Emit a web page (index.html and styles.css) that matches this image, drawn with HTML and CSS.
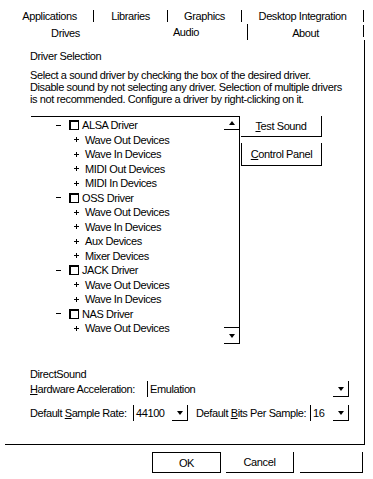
FILE: index.html
```html
<!DOCTYPE html>
<html>
<head>
<meta charset="utf-8">
<link rel="stylesheet" href="styles.css">
</head>
<body>
<div class="dialog">
  <div class="tabs">
    <div class="tabrow row1">
      <div class="tab t-app">Applications</div>
      <div class="tab t-lib">Libraries</div>
      <div class="tab t-gfx">Graphics</div>
      <div class="tab t-desk">Desktop Integration</div>
    </div>
    <div class="tabrow row2">
      <div class="tab t-drives">Drives</div>
      <div class="tab t-audio">Audio</div>
      <div class="tab t-about">About</div>
    </div>
  </div>
  <div class="panel">
    <div class="heading">Driver Selection</div>
    <p class="intro">Select a sound driver by checking the box of the desired driver.<br>Disable sound by not selecting any driver. Selection of multiple drivers<br>is not recommended. Configure a driver by right-clicking on it.</p>
    <div class="drivers">
      <div class="listbox">
        <ul class="tree">
          <li class="node parent"><span class="collapse"></span><span class="check"></span>ALSA Driver</li>
          <li class="node child"><span class="expand"></span>Wave Out Devices</li>
          <li class="node child"><span class="expand"></span>Wave In Devices</li>
          <li class="node child"><span class="expand"></span>MIDI Out Devices</li>
          <li class="node child"><span class="expand"></span>MIDI In Devices</li>
          <li class="node parent"><span class="collapse"></span><span class="check"></span>OSS Driver</li>
          <li class="node child"><span class="expand"></span>Wave Out Devices</li>
          <li class="node child"><span class="expand"></span>Wave In Devices</li>
          <li class="node child"><span class="expand"></span>Aux Devices</li>
          <li class="node child"><span class="expand"></span>Mixer Devices</li>
          <li class="node parent"><span class="collapse"></span><span class="check"></span>JACK Driver</li>
          <li class="node child"><span class="expand"></span>Wave Out Devices</li>
          <li class="node child"><span class="expand"></span>Wave In Devices</li>
          <li class="node parent"><span class="collapse"></span><span class="check"></span>NAS Driver</li>
          <li class="node child"><span class="expand"></span>Wave Out Devices</li>
        </ul>
        <div class="scrollbar">
          <div class="sb-btn sb-up"><span class="arrow-up"></span></div>
          <div class="sb-track"></div>
          <div class="sb-btn sb-down"><span class="arrow-down"></span></div>
        </div>
      </div>
      <div class="side-buttons">
        <div class="btn btn-test"><span><u>T</u>est Sound</span></div>
        <div class="btn btn-cp"><span><u>C</u>ontrol Panel</span></div>
      </div>
    </div>
    <div class="ds-title">DirectSound</div>
    <div class="ds-row ds-row1">
      <div class="lbl lbl-hw"><u>H</u>ardware Acceleration:</div>
      <div class="combo combo-hw"><span class="combo-text">Emulation</span><span class="combo-btn"><span class="arrow-down"></span></span></div>
    </div>
    <div class="ds-row ds-row2">
      <div class="lbl lbl-rate">Default <u>S</u>ample Rate:</div>
      <div class="combo combo-rate"><span class="combo-text">44100</span><span class="combo-btn"><span class="arrow-down"></span></span></div>
      <div class="lbl lbl-bits">Default <u>B</u>its Per Sample:</div>
      <div class="combo combo-bits"><span class="combo-text">16</span><span class="combo-btn"><span class="arrow-down"></span></span></div>
    </div>
  </div>
  <div class="footer">
    <div class="btn fbtn btn-ok">OK</div>
    <div class="btn fbtn btn-cancel">Cancel</div>
    <div class="btn fbtn btn-apply"></div>
  </div>
</div>
</body>
</html>
```

FILE: styles.css
```css
* { box-sizing: border-box; }

body {
  margin: 0;
  background: #fff;
  color: #000;
  font-family: "Liberation Sans", Arial, sans-serif;
  font-size: 11px;
  letter-spacing: -0.4px;
}

.dialog {
  width: 373px;
  height: 479px;
  overflow: hidden;
}

/* ---------- tabs ---------- */
.tabs { padding-top: 10px; }

.tabrow {
  display: flex;
  margin-left: 6px;
}

.tab {
  text-align: center;
  white-space: nowrap;
}

.row1 .tab {
  height: 12px;
  line-height: 12px;
  border-right: 1px solid #000;
}

.t-app { width: 88px; }
.t-lib { width: 74px; }
.t-gfx { width: 74px; }
.t-desk { width: 122px; }

.row2 {
  height: 18px;
  align-items: flex-start;
}

.t-drives {
  width: 119px;
  margin-top: 4px;
  line-height: 14px;
}

.t-audio {
  width: 123px;
  margin-top: 2px;
  height: 16px;
  line-height: 16px;
  border-right: 1px solid #000;
}

.t-about {
  width: 116px;
  margin-top: 3px;
  height: 12px;
  line-height: 16px;
  border-right: 1px solid #000;
}

/* ---------- panel ---------- */
.panel {
  margin-left: 5px;
  width: 360px;
  height: 405px;
  border-right: 1px solid #000;
  border-bottom: 1px solid #000;
  padding: 10px 0 0 25px;
}

.heading { line-height: 12px; }

.intro {
  margin: 7px 0 0;
  line-height: 12px;
  white-space: nowrap;
}

.drivers {
  display: flex;
  margin-top: 11px;
  margin-left: 1px;
}

.listbox {
  width: 209px;
  height: 228px;
  border-top: 1px solid #000;
  border-right: 1px solid #000;
  display: flex;
}

.tree {
  list-style: none;
  margin: 0;
  padding: 1px 0 0;
  flex: 1;
}

.node {
  display: flex;
  align-items: center;
  height: 14.5px;
  line-height: 14.5px;
  white-space: nowrap;
}

.node.parent { padding-left: 25px; }
.node.child { padding-left: 43px; }

.collapse {
  width: 5px;
  height: 1px;
  background: #000;
  margin-right: 8px;
}

.check {
  width: 10px;
  height: 10px;
  border: 1px solid #000;
  box-shadow: inset 1px 1px 0 #000;
  margin-right: 3px;
}

.expand {
  width: 5px;
  height: 5px;
  margin-right: 6px;
  background:
    linear-gradient(#000, #000) 0 2px / 5px 1px no-repeat,
    linear-gradient(#000, #000) 2px 0 / 1px 5px no-repeat;
}

.scrollbar {
  width: 15px;
  display: flex;
  flex-direction: column;
}

.sb-btn {
  display: flex;
  align-items: center;
  justify-content: center;
}

.sb-up {
  height: 13px;
  border-bottom: 1px solid #000;
}

.sb-track { flex: 1; }

.sb-down {
  height: 17px;
  border-top: 1px solid #000;
  border-bottom: 1px solid #000;
}

.arrow-up,
.arrow-down {
  display: block;
  width: 1px;
  height: 0;
  border-left: 3px solid transparent;
  border-right: 3px solid transparent;
}

.arrow-up { border-bottom: 4px solid #000; }
.arrow-down { border-top: 4px solid #000; }

.side-buttons {
  margin-left: 1px;
  width: 81px;
  display: flex;
  flex-direction: column;
}

.btn {
  display: flex;
  align-items: center;
  justify-content: center;
  white-space: nowrap;
}

.btn-test {
  height: 21px;
  border-right: 1px solid #000;
  border-bottom: 1px solid #000;
}

.btn-cp {
  margin-top: 6px;
  height: 23px;
  border-left: 1px solid #000;
  border-right: 1px solid #000;
  border-bottom: 1px solid #000;
}

/* ---------- DirectSound ---------- */
.ds-title {
  margin-top: 24px;
  line-height: 12px;
}

.ds-row {
  display: flex;
  align-items: center;
  height: 16px;
}

.ds-row1 { margin-top: 1px; }
.ds-row2 { margin-top: 8px; }

.lbl { white-space: nowrap; }
.lbl-hw { width: 117px; }
.lbl-rate { width: 103px; }
.lbl-bits { width: 114px; margin-left: 8px; }

.combo {
  height: 16px;
  border-left: 1px solid #000;
  display: flex;
}

.combo-hw { width: 202px; }
.combo-rate { width: 55px; }
.combo-bits { width: 39px; }

.combo-text {
  flex: 1;
  padding-left: 2px;
  line-height: 16px;
}

.combo-btn {
  width: 16px;
  border-right: 1px solid #000;
  border-bottom: 1px solid #000;
  display: flex;
  align-items: center;
  justify-content: center;
}

/* ---------- footer ---------- */
.footer {
  display: flex;
  justify-content: flex-end;
  padding-right: 10px;
  margin-top: 7px;
}

.fbtn { height: 21px; }

.btn-ok {
  width: 69px;
  border: 1px solid #000;
}

.btn-cancel {
  width: 68px;
  margin-left: 5px;
  border-right: 1px solid #000;
  border-bottom: 1px solid #000;
}

.btn-apply {
  width: 63px;
  margin-left: 6px;
  border-right: 1px solid #000;
  border-bottom: 1px solid #000;
}
```
